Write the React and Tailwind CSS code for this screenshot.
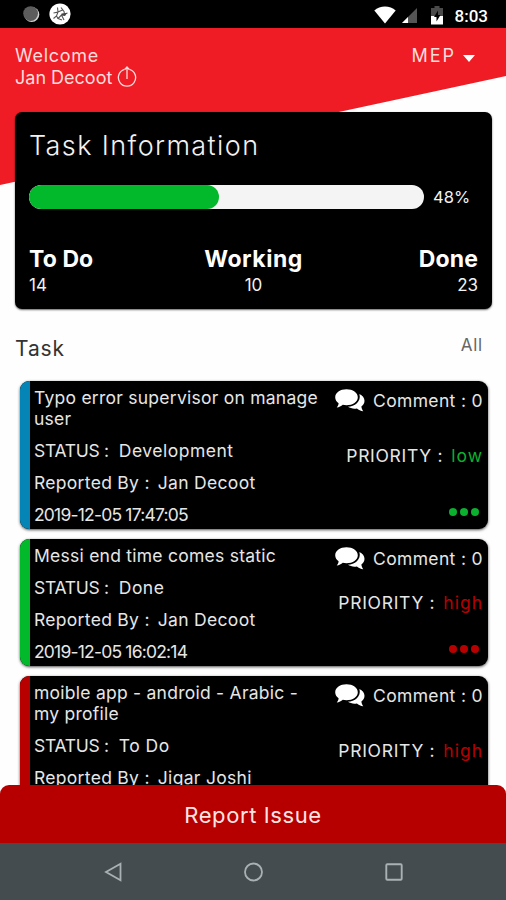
const STATS = [
  { label: 'To Do', value: 14, align: 'text-left', tracking: 'tracking-[0.1px]' },
  { label: 'Working', value: 10, align: 'text-center', tracking: 'tracking-[0.5px]' },
  { label: 'Done', value: 23, align: 'text-right', tracking: 'tracking-[0.1px]' },
];

const TASKS = [
  {
    id: 1,
    title: 'Typo error supervisor on manage user',
    status: 'Development',
    reporter: 'Jan Decoot',
    date: '2019-12-05 17:47:05',
    priority: 'low',
    bar: 'bg-[#0585b5]',
    tone: 'text-[#0cb02f]',
  },
  {
    id: 2,
    title: 'Messi end time comes static',
    status: 'Done',
    reporter: 'Jan Decoot',
    date: '2019-12-05 16:02:14',
    priority: 'high',
    bar: 'bg-[#02b92b]',
    tone: 'text-[#b80000]',
  },
  {
    id: 3,
    title: 'moible app - android - Arabic - my profile',
    status: 'To Do',
    reporter: 'Jigar Joshi',
    date: '2019-12-05 15:31:40',
    priority: 'high',
    bar: 'bg-[#b80000]',
    tone: 'text-[#b80000]',
  },
];

function CommentsIcon() {
  return (
    <svg className="mr-[8px]" width="30" height="23" viewBox="0 0 30 23" fill="#fff">
      <path d="M11.500 .2C17.800 .2 22.800 3.700 22.800 8.200s-5 8-11.300 8c-1.300 0-2.500-.2-3.700-.500-1.700 1.500-3.700 2.500-6 2.700 1-1.100 1.700-2.400 1.800-4.100C1.500 12.800 .2 10.600 .2 8.200c0-4.500 5-8 11.300-8z" />
      <path d="M24.400 5c3 1.400 5.100 3.900 5.100 6.800 0 2.300-1.200 4.200-3.100 5.700.1 1.800.9 3.300 1.900 4.700-2.600-.300-4.700-1.300-6.400-2.800-3.200.6-6.500 0-9-1.600C19.500 17.600 26.500 12.500 24.400 5z" />
    </svg>
  );
}

function StatusBar() {
  return (
    <div className="flex h-[28px] shrink-0 items-center bg-black pl-[22px] pr-[18px] text-white">
      <svg width="18" height="18" viewBox="0 0 18 18">
        <circle cx="9.700" cy="9.500" r="7.600" fill="#d0d0d0" />
        <circle cx="8.600" cy="8.600" r="7.400" fill="#5c5c5c" />
      </svg>
      <svg className="ml-[9px]" width="22" height="22" viewBox="0 0 22 22">
        <circle cx="11" cy="11" r="10.600" fill="#fff" />
        <path
          d="M8.500 4.500 9 9l-4.500 1M9 9l4.500-2M12 4.500l3 4 .5 2.500 3-1M15.500 11l-3 1 2.500 5M12.500 12 9 15.500l4 1.500M9 9l-1.500 4L4.500 15.500M7.500 13 9 15.500"
          fill="none"
          stroke="#555"
          strokeWidth="1.100"
        />
        <path d="m12.500 10.500 5.500-.5-2 3-3.500-.5z" fill="#444" />
      </svg>
      <svg className="ml-auto mt-px" width="22" height="18" viewBox="0 0 22 18">
        <path d="M.3 4.500C6-1 16-1 21.700 4.500L11 17.500z" fill="#fff" />
      </svg>
      <svg className="ml-[6px] mt-[3px]" width="15" height="15" viewBox="0 0 15 15">
        <path d="M15 0v15H0z" fill="#555" />
        <path d="M6 9v6H0z" fill="#fff" />
      </svg>
      <svg className="ml-[14px] mt-[2px]" width="12" height="19" viewBox="0 0 12 19">
        <path d="M3.500 0h5v2H12v8H0V2h3.500z" fill="#4a4a4a" />
        <path d="M0 10h12v8.500H0z" fill="#fff" />
        <path d="M7 4.500 3 11h2.500v4.500L9.500 9H7z" fill="#000" />
      </svg>
      <span className="ml-[12px] mt-[4px] font-['Roboto'] text-[17px] font-medium leading-none">8:03</span>
    </div>
  );
}

function Header() {
  return (
    <div className="flex h-[61px] justify-between pl-[15px] pr-[31px] pt-[17px] text-[18px] leading-[22px] text-[#ffdcdc]">
      <div>
        <p className="tracking-[0.7px]">Welcome</p>
        <div className="flex h-[22px] items-center gap-[5px]">
          <span>Jan Decoot</span>
          <svg className="mb-[3px]" width="20" height="21" viewBox="0 0 20 21" fill="none" stroke="currentColor" strokeWidth="1.300">
            <path d="M7.500 3.300a8.600 8.600 0 1 0 5 0M10 13V1.500M7.800 3.500 10 1l2.200 2.500" />
          </svg>
        </div>
      </div>
      <div className="flex h-[22px] items-center gap-[7px]">
        <span className="tracking-[2px]">MEP</span>
        <svg className="mt-[5px]" width="12" height="7" viewBox="0 0 12 7">
          <path d="M0 0h12L6 7z" fill="#fff" />
        </svg>
      </div>
    </div>
  );
}

function TaskInformation({ percent }) {
  return (
    <section className="ml-[15px] mr-[14px] mt-[23px] h-[197px] rounded-[7px] bg-black px-[14px] pt-[17px] text-[#f2f2f2] shadow-[0_1px_2px_rgba(0,0,0,0.6)]">
      <h1 className="text-[27px] font-light leading-[34px] tracking-[1.4px]">Task Information</h1>
      <div className="mt-[22px] flex items-center">
        <div className="h-[24px] w-[395px] overflow-hidden rounded-full bg-[#f4f4f4]">
          <div className="h-full rounded-full bg-[#02b82b]" style={{ width: `${percent}%` }} />
        </div>
        <span className="ml-[9px] text-[16.500px] tracking-[0.1px]">{percent}%</span>
      </div>
      <div className="mt-[36px] grid grid-cols-3">
        {STATS.map((stat) => (
          <div key={stat.label} className={stat.align}>
            <p className={`text-[23px] font-bold leading-[27px] text-white ${stat.tracking}`}>{stat.label}</p>
            <p className="text-[17px] leading-[24px]">{stat.value}</p>
          </div>
        ))}
      </div>
    </section>
  );
}

function TaskCard({ task }) {
  return (
    <article className="flex shrink-0 overflow-hidden rounded-[9px] bg-black text-[17.500px] leading-[21px] text-[#e6e6e6] shadow-[0_1px_3px_rgba(0,0,0,0.7)]">
      <div className={`w-[10px] shrink-0 ${task.bar}`} />
      <div className="flex w-[297px] shrink-0 flex-col gap-[11px] pb-[4px] pl-[4px] pt-[6px]">
        <p className="tracking-[0.25px]">{task.title}</p>
        <p className="flex gap-[10px]">
          <span className="tracking-[-0.3px]">STATUS :</span>
          <span className="tracking-[0.5px]">{task.status}</span>
        </p>
        <p className="flex gap-[8px] tracking-[0.3px]">
          <span>Reported By :</span>
          <span>{task.reporter}</span>
        </p>
        <p className="tracking-[-0.8px]">{task.date}</p>
      </div>
      <div className="flex flex-1 flex-col items-end justify-between pb-[13px] pr-[5px] pt-[6px]">
        <div className="flex h-[27px] items-center">
          <CommentsIcon />
          <span className="whitespace-nowrap tracking-[0.35px]">Comment : 0</span>
        </div>
        <p className="mb-[12px] flex gap-[8px] whitespace-nowrap">
          <span className="tracking-[0.7px]">PRIORITY :</span>
          <span className={`tracking-[1px] ${task.tone}`}>{task.priority}</span>
        </p>
        <div className={`flex gap-[3px] pr-[4px] ${task.tone}`}>
          <i className="size-[8px] rounded-full bg-current" />
          <i className="size-[8px] rounded-full bg-current" />
          <i className="size-[8px] rounded-full bg-current" />
        </div>
      </div>
    </article>
  );
}

function NavBar() {
  return (
    <div className="flex h-[57px] shrink-0 items-center justify-between bg-[#454c50] pl-[104px] pr-[103px]">
      <svg width="19" height="20" viewBox="0 0 19 20" fill="none" stroke="#a9b1b4" strokeWidth="1.800">
        <path d="M16.500 1.800v16.400L2 10z" />
      </svg>
      <svg width="20" height="20" viewBox="0 0 20 20" fill="none" stroke="#a9b1b4" strokeWidth="1.800">
        <circle cx="9.500" cy="10" r="8.500" />
      </svg>
      <svg width="18" height="18" viewBox="0 0 18 18" fill="none" stroke="#a9b1b4" strokeWidth="1.900">
        <rect x="1.300" y="1.300" width="15.400" height="15.400" rx="1" />
      </svg>
    </div>
  );
}

export default function App() {
  return (
    <div className="flex h-[900px] w-[506px] flex-col overflow-hidden bg-[#fefefe] font-['Inter',sans-serif]">
      <StatusBar />
      <main className="relative flex min-h-0 flex-1 flex-col">
        {/* slanted red backdrop */}
        <div className="absolute inset-x-0 top-0 h-[157px] bg-[#ef1c25] [clip-path:polygon(0_0,100%_0,100%_48px,0_157px)]" />
        <div className="relative flex min-h-0 flex-1 flex-col">
          <Header />
          <TaskInformation percent={48} />
          <div className="flex justify-between pl-[15px] pr-[23px] pt-[26px]">
            <h2 className="text-[21px] leading-[28px] tracking-[0.9px] text-[#333]">Task</h2>
            <span className="text-[17px] leading-[20px] tracking-[0.8px] text-[#666]">All</span>
          </div>
          <div className="ml-[20px] mr-[18px] mt-[18px] flex min-h-0 flex-1 flex-col gap-[10px]">
            {TASKS.map((task) => (
              <TaskCard key={task.id} task={task} />
            ))}
          </div>
        </div>
      </main>
      <button className="relative h-[58px] w-full shrink-0 rounded-t-[9px] bg-[#b60000] pt-[3px] text-[22px] tracking-[0.6px] text-[#ffe4e4]">
        Report Issue
      </button>
      <NavBar />
    </div>
  );
}
